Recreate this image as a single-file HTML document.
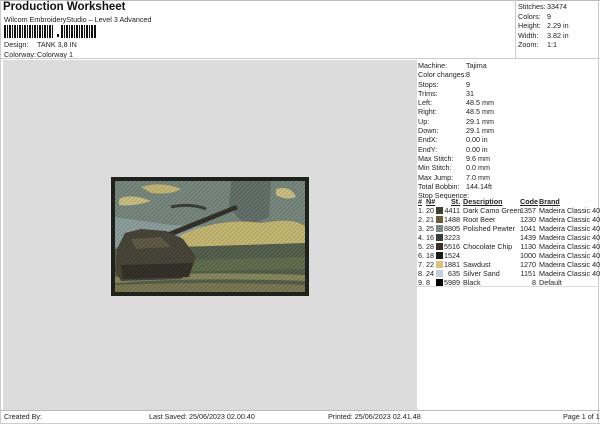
<!DOCTYPE html>
<html><head><meta charset="utf-8"><style>
*{margin:0;padding:0;box-sizing:border-box}
body{width:600px;height:424px;background:#fff;position:relative;overflow:hidden;font-family:"Liberation Sans",sans-serif;font-size:7.2px;color:#222}
.a{position:absolute;white-space:nowrap}
.t{font-size:7.2px;line-height:9px}
</style></head><body>
<div class="a" style="left:0;top:0;width:600px;height:1px;background:#bbb"></div>
<div class="a" style="left:3px;top:1px;font-size:11.5px;font-weight:bold;color:#111">Production Worksheet</div>
<div class="a t" style="left:4px;top:15px">Wilcom EmbroideryStudio – Level 3 Advanced</div>
<svg class="a" style="left:4px;top:25px" width="96" height="14">
<g fill="#111">
<rect x="0" y="0" width="2" height="13"/><rect x="3" y="0" width="1" height="13"/><rect x="5" y="0" width="2" height="13"/><rect x="8" y="0" width="1" height="13"/><rect x="10" y="0" width="2" height="13"/><rect x="13" y="0" width="1" height="13"/><rect x="15" y="0" width="2" height="13"/><rect x="18" y="0" width="1" height="13"/><rect x="20" y="0" width="2" height="13"/><rect x="23" y="0" width="1" height="13"/><rect x="25" y="0" width="2" height="13"/><rect x="28" y="0" width="1" height="13"/><rect x="30" y="0" width="2" height="13"/><rect x="33" y="0" width="1" height="13"/><rect x="35" y="0" width="2" height="13"/><rect x="38" y="0" width="1" height="13"/><rect x="40" y="0" width="2" height="13"/><rect x="43" y="0" width="1" height="13"/><rect x="45" y="0" width="2" height="13"/><rect x="48" y="0" width="1" height="13"/>
<rect x="53" y="9" width="2" height="3"/>
<rect x="57" y="0" width="2" height="13"/><rect x="60" y="0" width="1" height="13"/><rect x="62" y="0" width="2" height="13"/><rect x="65" y="0" width="1" height="13"/><rect x="67" y="0" width="2" height="13"/><rect x="70" y="0" width="1" height="13"/><rect x="72" y="0" width="2" height="13"/><rect x="75" y="0" width="1" height="13"/><rect x="77" y="0" width="2" height="13"/><rect x="80" y="0" width="1" height="13"/><rect x="82" y="0" width="2" height="13"/><rect x="85" y="0" width="1" height="13"/><rect x="87" y="0" width="2" height="13"/><rect x="90" y="0" width="2" height="13"/>
</g></svg>
<div class="a t" style="left:4px;top:40px">Design:</div><div class="a t" style="left:37px;top:40px">TANK 3,8 IN</div>
<div class="a t" style="left:4px;top:50px">Colorway:</div><div class="a t" style="left:37px;top:50px">Colorway 1</div>
<div class="a" style="left:515px;top:0;width:1px;height:58px;background:#ccc"></div>
<div class="a" style="left:598px;top:0;width:1px;height:424px;background:#ccc"></div>
<div class="a" style="left:0;top:0;width:1px;height:424px;background:#ccc"></div>
<div class="a t" style="left:518px;top:2px;line-height:9.5px">Stitches:<br>Colors:<br>Height:<br>Width:<br>Zoom:</div>
<div class="a t" style="left:547px;top:2px;line-height:9.5px">33474<br>9<br>2.29 in<br>3.82 in<br>1:1</div>
<div class="a" style="left:0;top:58px;width:600px;height:1px;background:#ccc"></div>
<div class="a" style="left:3px;top:60px;width:414px;height:350px;background:#dcdcdc"></div>
<svg class="a" style="left:111px;top:177px" width="198" height="119" viewBox="0 0 198 119">
<defs><pattern id="p" width="3" height="3" patternUnits="userSpaceOnUse" patternTransform="rotate(45)"><rect width="1.5" height="3" fill="#000" opacity=".12"/></pattern></defs>
<rect width="198" height="119" fill="#1e211c"/>
<rect x="4" y="4" width="190" height="111" fill="#7a8a80"/>
<path d="M4 40 L60 48 L110 50 L194 48 L194 70 L4 70Z" fill="#8fa2a0"/>
<path d="M30 10 Q50 4 70 12 Q60 18 40 16Z" fill="#c8bb78"/>
<path d="M8 22 Q20 16 40 24 Q22 30 8 28Z" fill="#cfc285"/>
<path d="M130 12 Q150 4 160 14 Q150 22 135 18Z" fill="#c8bb78"/>
<path d="M165 12 Q180 8 185 20 Q175 24 165 18Z" fill="#cfc285"/>
<path d="M120 4 L160 4 L158 40 L135 50 L118 30Z" fill="#66726c"/>
<path d="M70 58 Q110 40 150 46 Q185 40 194 50 L194 70 L70 72Z" fill="#c9ba75"/>
<path d="M4 72 L194 66 L194 115 L4 115Z" fill="#56624e"/>
<path d="M4 85 L194 80 L194 92 L4 96Z" fill="#62704f"/>
<path d="M4 100 Q80 94 194 98 L194 104 Q80 100 4 106Z" fill="#8c8a5e"/>
<path d="M4 108 Q90 104 194 108 L194 115 L4 115Z" fill="#7e7a55"/>
<path d="M50 58 L125 28 L127 32 L54 62Z" fill="#34322a"/>
<path d="M6 72 L14 56 L30 52 L55 54 L72 62 L85 80 L80 94 L70 102 L10 104 L4 94Z" fill="#4a463a"/>
<path d="M10 88 L82 86 L78 100 L12 102Z" fill="#35322b"/>
<path d="M20 62 L50 60 L60 70 L25 72Z" fill="#625b4a"/>
<path d="M60 30 Q80 26 95 32" stroke="#3a423c" stroke-width="3" fill="none"/>
<rect x="4" y="4" width="190" height="111" fill="url(#p)"/>
</svg>
<div class="a t" style="left:418px;top:61px;line-height:9.3px">Machine:<br>Color changes:<br>Stops:<br>Trims:<br>Left:<br>Right:<br>Up:<br>Down:<br>EndX:<br>EndY:<br>Max Stitch:<br>Min Stitch:<br>Max Jump:<br>Total Bobbin:<br>Stop Sequence:</div>
<div class="a t" style="left:466px;top:61px;line-height:9.3px">Tajima<br>8<br>9<br>31<br>48.5 mm<br>48.5 mm<br>29.1 mm<br>29.1 mm<br>0.00 in<br>0.00 in<br>9.6 mm<br>0.0 mm<br>7.0 mm<br>144.14ft</div>
<div class="a t" style="left:418px;top:197px;font-weight:bold;text-decoration:underline">#</div>
<div class="a t" style="left:426px;top:197px;font-weight:bold;text-decoration:underline">N#</div>
<div class="a t" style="left:451px;top:197px;font-weight:bold;text-decoration:underline">St.</div>
<div class="a t" style="left:463px;top:197px;font-weight:bold;text-decoration:underline">Description</div>
<div class="a t" style="left:520px;top:197px;font-weight:bold;text-decoration:underline">Code</div>
<div class="a t" style="left:539px;top:197px;font-weight:bold;text-decoration:underline">Brand</div>
<div class="a t" style="left:418px;top:206px">1. 20<br>2. 21<br>3. 25<br>4. 16<br>5. 28<br>6. 18<br>7. 22<br>8. 24<br>9. 8</div>
<div class="a" style="left:436px;top:207px">
<div style="width:7px;height:7px;background:#3d4033;margin-bottom:2px"></div>
<div style="width:7px;height:7px;background:#6b5a3e;margin-bottom:2px"></div>
<div style="width:7px;height:7px;background:#7d8686;margin-bottom:2px"></div>
<div style="width:7px;height:7px;background:#3a3a38;margin-bottom:2px"></div>
<div style="width:7px;height:7px;background:#3a2f29;margin-bottom:2px"></div>
<div style="width:7px;height:7px;background:#1c1c1c;margin-bottom:2px"></div>
<div style="width:7px;height:7px;background:#e0c07a;margin-bottom:2px"></div>
<div style="width:7px;height:7px;background:#c2cfdc;margin-bottom:2px"></div>
<div style="width:7px;height:7px;background:#000"></div>
</div>
<div class="a t" style="left:440px;top:206px;text-align:right;width:20px">4411<br>1488<br>8805<br>3223<br>5516<br>1524<br>1881<br>635<br>5989</div>
<div class="a t" style="left:463px;top:206px">Dark Camo Green<br>Root Beer<br>Polished Pewter<br><br>Chocolate Chip<br><br>Sawdust<br>Silver Sand<br>Black</div>
<div class="a t" style="left:516px;top:206px;text-align:right;width:20px">1357<br>1230<br>1041<br>1439<br>1130<br>1000<br>1270<br>1151<br>8</div>
<div class="a t" style="left:539px;top:206px">Madeira Classic 40<br>Madeira Classic 40<br>Madeira Classic 40<br>Madeira Classic 40<br>Madeira Classic 40<br>Madeira Classic 40<br>Madeira Classic 40<br>Madeira Classic 40<br>Default</div>
<div class="a" style="left:417px;top:286px;width:182px;height:1px;background:#ddd"></div>
<div class="a" style="left:0;top:410px;width:600px;height:1px;background:#bbb"></div>
<div class="a" style="left:0;top:423px;width:600px;height:1px;background:#ccc"></div>
<div class="a t" style="left:4px;top:412px">Created By:</div>
<div class="a t" style="left:149px;top:412px">Last Saved: 25/06/2023 02.00.40</div>
<div class="a t" style="left:328px;top:412px">Printed: 25/06/2023 02.41.48</div>
<div class="a t" style="left:563px;top:412px">Page 1 of 1</div>
</body></html>
